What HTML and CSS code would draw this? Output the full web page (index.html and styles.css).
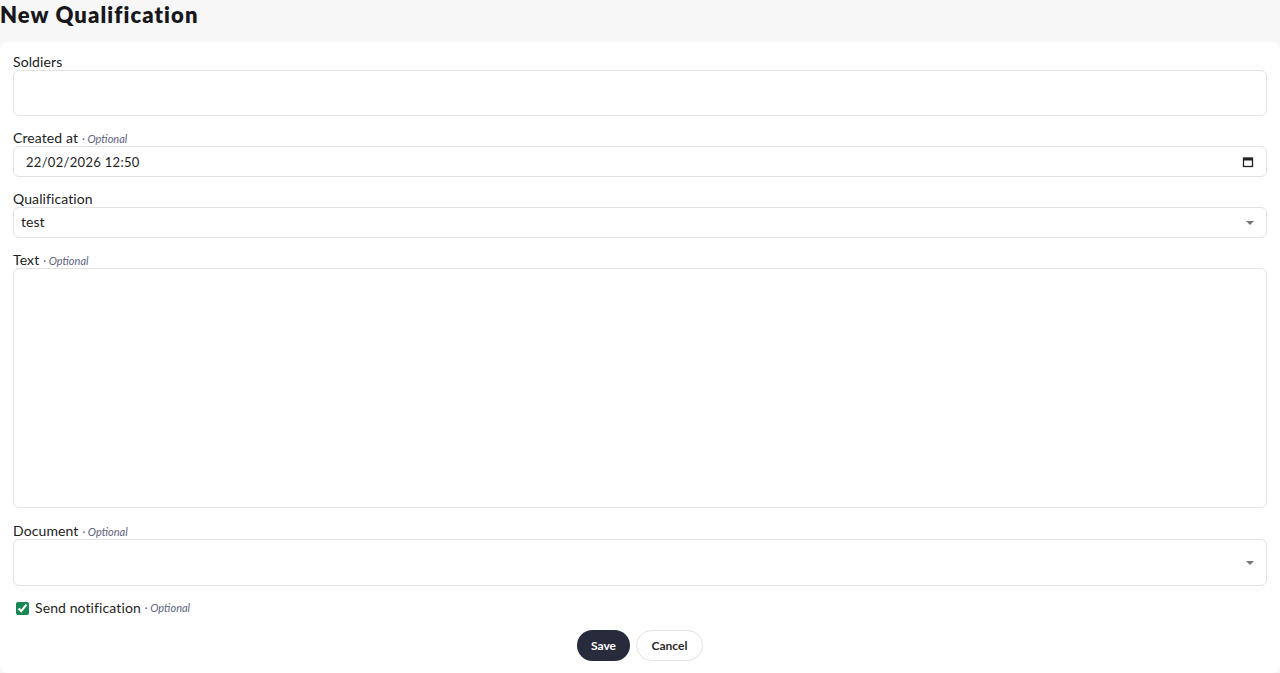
FILE: index.html
```html
<!DOCTYPE html>
<html>

<head>
  <meta name="viewport" content="width=device-width, initial-scale=1">
  <title>New Qualification</title>
  <link rel="stylesheet" href="styles.css">
</head>

<body>
  <h1 class="page-title">New Qualification</h1>

  <form class="card">
    <div class="field">
      <label class="field-label">Soldiers</label>
      <div class="box box-tall"></div>
    </div>

    <div class="field">
      <label class="field-label">Created at <span class="optional">· Optional</span></label>
      <div class="box box-input">
        <span class="value mono">22/02/2026 12:50</span>
        <svg class="cal-icon" width="12" height="12" viewBox="0 0 12 12">
          <rect x="1.5" y="2" width="9" height="8.5" fill="none" stroke="#222" stroke-width="1.3" />
          <rect x="1.5" y="2" width="9" height="2.5" fill="#222" />
        </svg>
      </div>
    </div>

    <div class="field">
      <label class="field-label">Qualification</label>
      <div class="box box-input">
        <span class="value selected">test</span>
        <span class="caret"></span>
      </div>
    </div>

    <div class="field">
      <label class="field-label">Text <span class="optional">· Optional</span></label>
      <div class="box box-area"></div>
    </div>

    <div class="field">
      <label class="field-label">Document <span class="optional">· Optional</span></label>
      <div class="box box-tall box-doc box-select">
        <span class="caret"></span>
      </div>
    </div>

    <label class="check-row">
      <input type="checkbox" checked>
      <span>Send notification</span> <span class="optional">· Optional</span>
    </label>

    <div class="actions">
      <button type="submit" class="btn btn-primary">Save</button>
      <button type="button" class="btn btn-light">Cancel</button>
    </div>
  </form>
</body>

</html>
```

FILE: styles.css
```css
body {
  font-family: Lato, "Open Sans", sans-serif;
  margin: 0;
  background-color: #f7f7f7;
  color: #1f1f23;
}

.page-title {
  margin: 0;
  padding: 0;
  height: 42px;
  line-height: 30px;
  font-size: 22px;
  font-weight: 800;
  letter-spacing: 1.1px;
  color: #17171c;
}

.card {
  background-color: #fff;
  border-radius: 8px;
  padding: 12px 13px 12px 13px;
  display: flex;
  flex-direction: column;
  gap: 14px;
}

.field {
  display: flex;
  flex-direction: column;
}

.field-label {
  display: flex;
  align-items: baseline;
  gap: 4px;
  height: 16px;
  font-size: 14px;
  line-height: 16px;
  color: #222;
  letter-spacing: 0.1px;
}

.optional {
  font-size: 11px;
  line-height: 16px;
  font-style: italic;
  color: #5f6380;
  letter-spacing: 0;
}

.box {
  border: 1px solid #e3e3e3;
  border-radius: 6px;
  box-sizing: border-box;
  background: #fff;
}

.box-tall {
  height: 46px;
}

.box-doc {
  height: 47px;
}

.box-input {
  height: 31px;
  display: flex;
  align-items: center;
  justify-content: space-between;
  padding: 0 12px 0 7px;
}

.box-area {
  height: 240px;
  margin-bottom: 1px;
}

.box-select {
  display: flex;
  align-items: center;
  justify-content: flex-end;
  padding: 0 12px;
}

.value {
  font-size: 14px;
  color: #222;
}

.value.selected {
  margin-top: -3px;
}

.value.mono {
  font-size: 13px;
  padding-left: 5px;
  letter-spacing: 0.3px;
}

.caret {
  width: 0;
  height: 0;
  border-left: 4px solid transparent;
  border-right: 4px solid transparent;
  border-top: 4px solid #777;
}

.check-row {
  display: flex;
  align-items: center;
  height: 16px;
  font-size: 14px;
  line-height: 16px;
  padding-left: 2px;
  letter-spacing: 0.1px;
}

.check-row input {
  margin: 0 6px 0 1px;
  width: 13px;
  height: 13px;
  accent-color: #198754;
}

.check-row .optional {
  margin-left: 4px;
}

.actions {
  display: flex;
  justify-content: center;
  gap: 6px;
}

.btn {
  font-family: inherit;
  font-size: 12px;
  font-weight: 700;
  height: 31px;
  border-radius: 16px;
  cursor: pointer;
}

.btn-primary {
  background-color: #272b3b;
  color: #fff;
  border: none;
  width: 53px;
}

.btn-light {
  background-color: #fff;
  color: #2a2a2a;
  border: 1px solid #e3e3e3;
  width: 67px;
}
```
